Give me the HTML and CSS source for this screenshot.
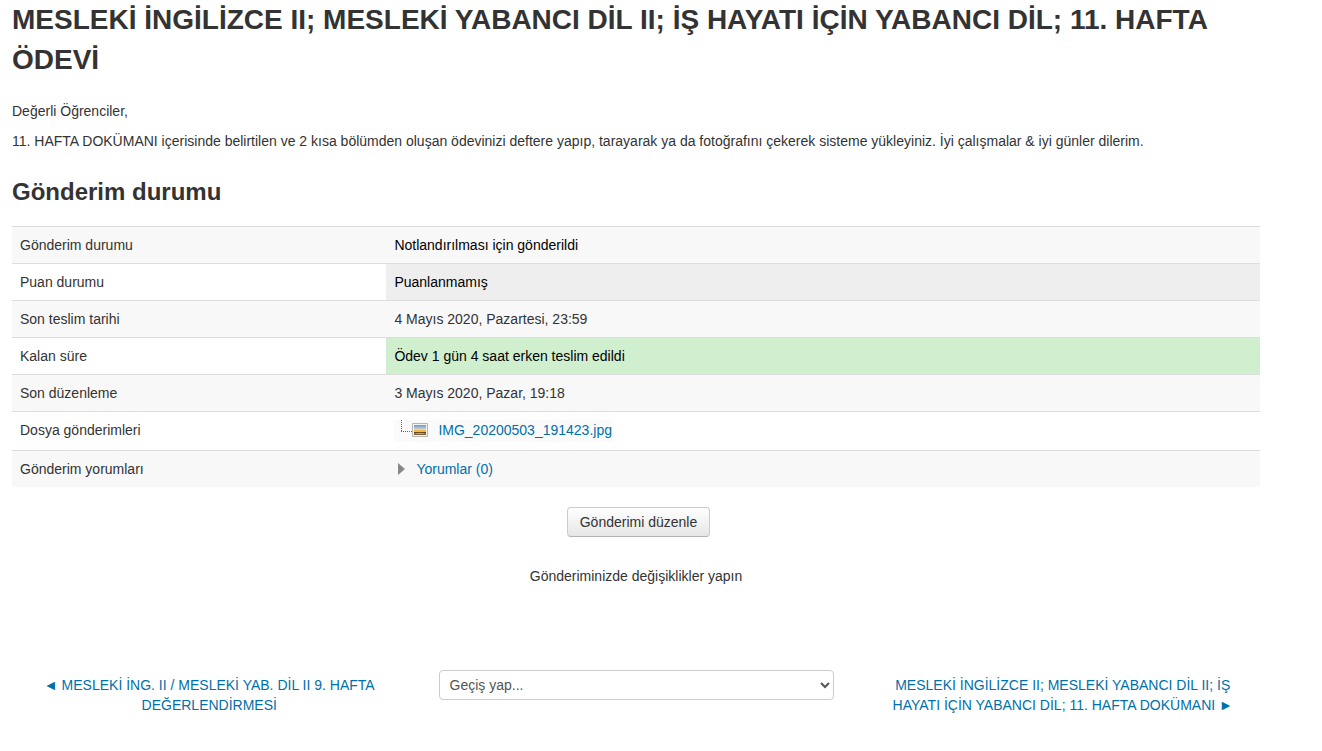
FILE: index.html
```html
<!DOCTYPE html>
<html lang="tr">
<head>
    <title>11. Hafta Ödevi</title>
    <meta charset="utf-8" />
    <link rel="stylesheet" href="styles.css">
</head>
<body>
    <div id="region-main">
        <h2>MESLEKİ İNGİLİZCE II; MESLEKİ YABANCI DİL II; İŞ HAYATI İÇİN YABANCI DİL; 11. HAFTA ÖDEVİ</h2>
        <div id="intro">
            <p>Değerli Öğrenciler,</p>
            <p>11. HAFTA DOKÜMANI içerisinde belirtilen ve 2 kısa bölümden oluşan ödevinizi deftere yapıp, tarayarak ya da fotoğrafını çekerek sisteme yükleyiniz. İyi çalışmalar &amp; iyi günler dilerim.</p>
        </div>
        <h3>Gönderim durumu</h3>
        <table class="generaltable">
            <tbody>
                <tr>
                    <td class="label">Gönderim durumu</td>
                    <td class="submitted">Notlandırılması için gönderildi</td>
                </tr>
                <tr>
                    <td class="label">Puan durumu</td>
                    <td class="notgraded">Puanlanmamış</td>
                </tr>
                <tr>
                    <td class="label">Son teslim tarihi</td>
                    <td>4 Mayıs 2020, Pazartesi, 23:59</td>
                </tr>
                <tr>
                    <td class="label">Kalan süre</td>
                    <td class="early">Ödev 1 gün 4 saat erken teslim edildi</td>
                </tr>
                <tr>
                    <td class="label">Son düzenleme</td>
                    <td>3 Mayıs 2020, Pazar, 19:18</td>
                </tr>
                <tr>
                    <td class="label">Dosya gönderimleri</td>
                    <td>
                        <div class="file">
                            <svg class="tree" width="12" height="22" viewBox="0 0 12 22"><path d="M1.5 0V12M1 11.500H12" fill="none" stroke="#666" stroke-dasharray="1 1" /></svg>
                            <svg class="icon" width="16" height="16" viewBox="0 0 16 16">
                                <defs>
                                    <linearGradient id="sky" x1="0" y1="0" x2="0" y2="1">
                                        <stop offset="0" stop-color="#6f9ac8" />
                                        <stop offset="1" stop-color="#f3ead2" />
                                    </linearGradient>
                                </defs>
                                <path d="M.5 1.500h15v13H.5z" fill="#f4f4f4" stroke="#b5b5b5" />
                                <path d="M2 3h12v6H2z" fill="url(#sky)" />
                                <path d="M2 8h12v2H2z" fill="#f5b942" />
                                <path d="M2 10h12v1H2z" fill="#6b4a1c" />
                                <path d="M2 11h12v2H2z" fill="#e0a53c" />
                                <path d="M2 13v-2l4 1 4 0 4-1v2z" fill="#7a6238" />
                            </svg>
                            <a href="#">IMG_20200503_191423.jpg</a>
                        </div>
                    </td>
                </tr>
                <tr>
                    <td class="label">Gönderim yorumları</td>
                    <td>
                        <a class="comments" href="#"><svg width="7" height="12" viewBox="0 0 7 12"><path d="M0 0l7 6-7 6z" fill="#888" /></svg>Yorumlar (0)</a>
                    </td>
                </tr>
            </tbody>
        </table>
        <div class="submission">
            <button type="button">Gönderimi düzenle</button>
            <p>Gönderiminizde değişiklikler yapın</p>
        </div>
        <div class="activity-nav">
            <a href="#">◄ MESLEKİ İNG. II / MESLEKİ YAB. DİL II 9. HAFTA DEĞERLENDİRMESİ</a>
            <select aria-label="Geçiş yap">
                <option>Geçiş yap...</option>
            </select>
            <a href="#">MESLEKİ İNGİLİZCE II; MESLEKİ YABANCI DİL II; İŞ HAYATI İÇİN YABANCI DİL; 11. HAFTA DOKÜMANI ►</a>
        </div>
    </div>
</body>
</html>
```
FILE: styles.css
```css
body {
    margin: 0;
    background: #fff;
    color: #333;
    font: 14px/20px "Liberation Sans", Arial, sans-serif;
}
#region-main {
    margin: 0 62px 0 12px;
}
h2, h3 {
    margin: 0;
    line-height: 40px;
}
h2 {
    font-size: 28px;
}
h3 {
    margin: 21px 0 14px;
    font-size: 24px;
}
#intro {
    padding-top: 21px;
}
p {
    margin: 0 0 10px;
}
a {
    color: #0070a8;
    text-decoration: none;
}
.generaltable {
    width: 100%;
    border-collapse: collapse;
}
    .generaltable td {
        padding: 8px;
        border-top: 1px solid #ddd;
        vertical-align: top;
    }
    .generaltable tr:nth-child(odd) td {
        background: #f8f8f8;
    }
    .generaltable td.label {
        width: 30%;
        box-sizing: border-box;
    }
    .generaltable td.submitted {
        color: #000;
    }
    .generaltable td.notgraded {
        color: #000;
        background: #eee;
    }
    .generaltable td.early {
        color: #000;
        background: #cfefcf;
    }
.file {
    display: flex;
    width: fit-content;
    height: 22px;
    padding-left: 6px;
    background: #fafafa;
}
.file .icon {
    margin: 2px 10px 0 0;
}
.comments svg {
    margin: 0 11px 0 4px;
    vertical-align: -1px;
}
.submission {
    padding-top: 20px;
    text-align: center;
}
    .submission p {
        margin: 29px 0 0;
    }
button {
    height: 30px;
    margin: 0 0 0 5px;
    padding: 4px 12px;
    border: 1px solid #ccc;
    border-bottom-color: #b3b3b3;
    border-radius: 4px;
    background: linear-gradient(#fff, #e6e6e6);
    color: #333;
    font: inherit;
}
.activity-nav {
    display: grid;
    grid-template-columns: 1fr 395px 1fr;
    column-gap: 32px;
    margin-top: 84px;
    text-align: center;
}
    .activity-nav a {
        padding: 5px 24px 0;
    }
select {
    width: 100%;
    height: 30px;
    padding: 4px 6px;
    border: 1px solid #ccc;
    border-radius: 4px;
    background: #fff;
    color: #555;
    font: inherit;
}
```
